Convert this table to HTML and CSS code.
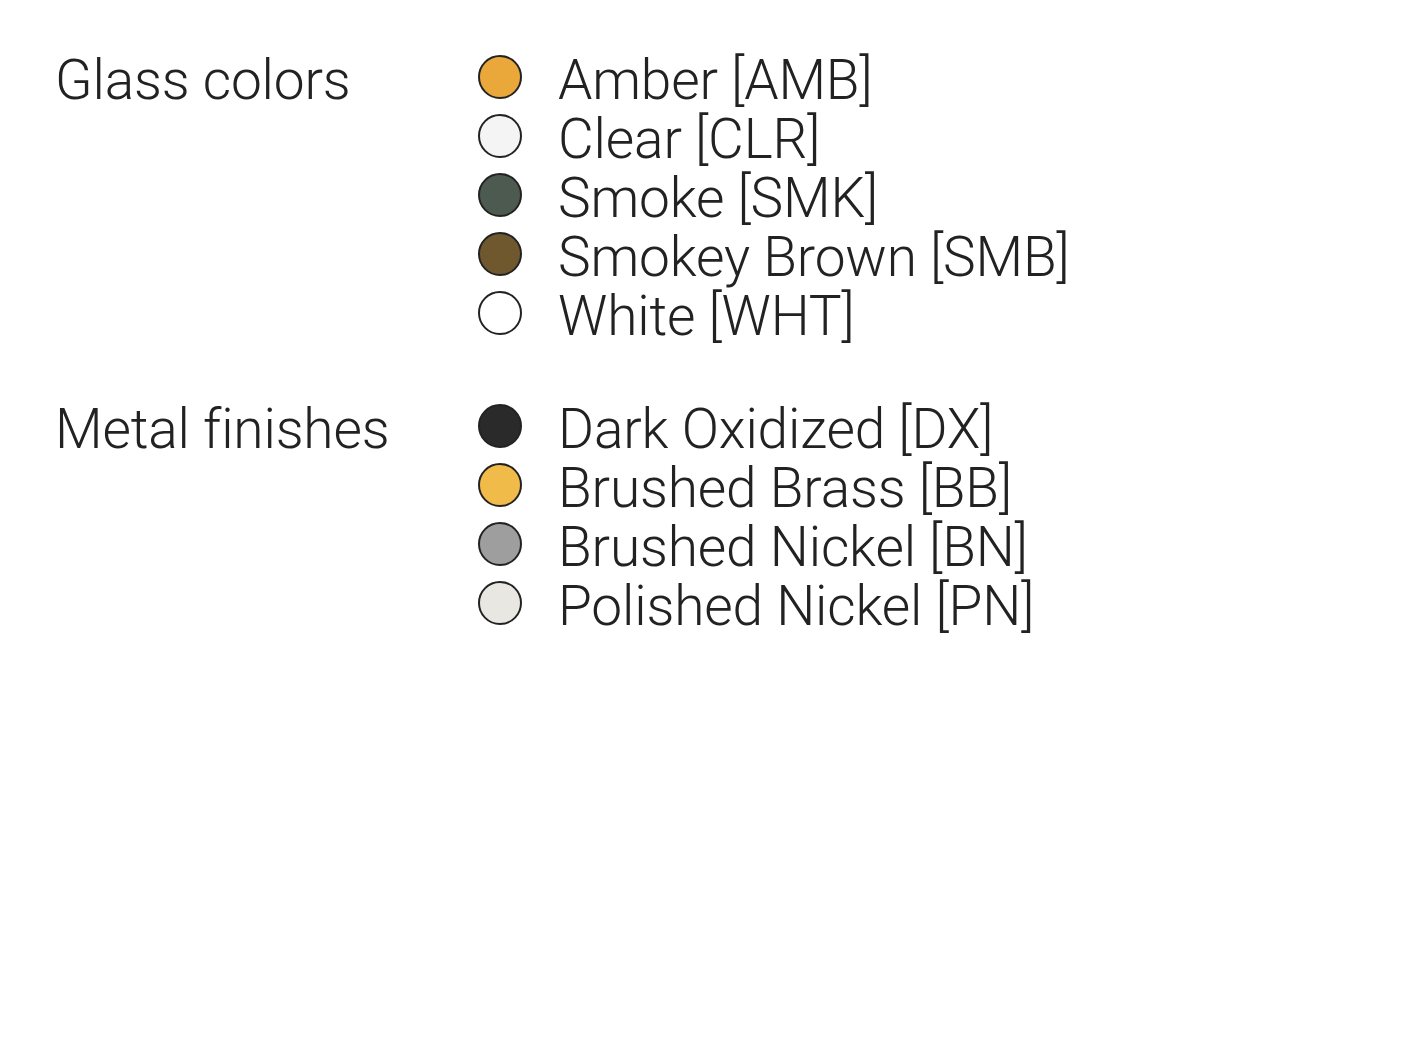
FILE: index.html
```html
<!DOCTYPE html>
<html>
<head>
<meta charset="utf-8">
<link rel="stylesheet" href="styles.css">
</head>
<body>
<div class="page">
  <section class="group">
    <h2 class="label">Glass colors</h2>
    <ul class="list">
      <li class="item"><span class="dot amber"></span><span class="name">Amber [AMB]</span></li>
      <li class="item"><span class="dot clear"></span><span class="name">Clear [CLR]</span></li>
      <li class="item"><span class="dot smoke"></span><span class="name">Smoke [SMK]</span></li>
      <li class="item"><span class="dot smb"></span><span class="name">Smokey Brown [SMB]</span></li>
      <li class="item"><span class="dot white"></span><span class="name">White [WHT]</span></li>
    </ul>
  </section>
  <section class="group">
    <h2 class="label">Metal finishes</h2>
    <ul class="list">
      <li class="item"><span class="dot dx"></span><span class="name">Dark Oxidized [DX]</span></li>
      <li class="item"><span class="dot bb"></span><span class="name">Brushed Brass [BB]</span></li>
      <li class="item"><span class="dot bn"></span><span class="name">Brushed Nickel [BN]</span></li>
      <li class="item"><span class="dot pn"></span><span class="name">Polished Nickel [PN]</span></li>
    </ul>
  </section>
</div>
</body>
</html>
```
FILE: styles.css
```css
html, body {
  margin: 0;
  padding: 0;
  background: #fff;
}
body {
  font-family: Roboto, "Liberation Sans", sans-serif;
  font-weight: 300;
  color: #222;
  letter-spacing: -0.15px;
}
.page {
  padding: 51px 0 0 55px;
  display: flex;
  flex-direction: column;
  gap: 54px;
}
.group {
  display: grid;
  grid-template-columns: 423px 1fr;
  align-items: start;
}
.label {
  margin: 0;
  font-size: 55px;
  font-weight: 300;
  line-height: 59px;
}
.list {
  list-style: none;
  margin: 0;
  padding: 0;
}
.item {
  display: flex;
  align-items: center;
  gap: 36px;
  height: 59px;
  font-size: 55px;
  line-height: 59px;
}
.dot {
  width: 40px;
  height: 40px;
  border: 2px solid #222;
  border-radius: 50%;
  flex: none;
  margin-top: -8px;
}
.amber { background: #eba83a; }
.clear { background: #f4f4f4; }
.smoke { background: #4d5a50; }
.smb { background: #6f582e; }
.white { background: #fff; }
.dx { background: #2a2a2a; }
.bb { background: #f0bb48; }
.bn { background: #9e9e9e; }
.pn { background: #e8e7e2; }
```
